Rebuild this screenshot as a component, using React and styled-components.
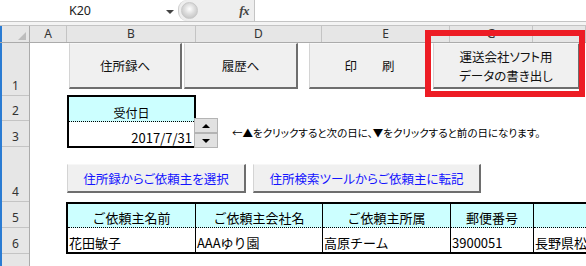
import React from 'react';
import styled, { createGlobalStyle } from 'styled-components';

const GlobalStyle = createGlobalStyle`
  html, body {
    margin: 0;
    padding: 0;
    background: #fff;
    overflow: hidden;
  }
  body {
    font-family: "Noto Sans CJK JP", "Noto Sans", sans-serif;
  }
`;

const JP = `"Noto Sans CJK JP", "Noto Sans", sans-serif`;

const Frame = styled.div`
  position: relative;
  width: 586px;
  height: 266px;
  overflow: hidden;
  background: #fff;
`;

/* ---------- formula bar ---------- */
const FormulaBar = styled.div`
  display: flex;
  height: 21px;
  border-bottom: 1px solid #c4c4c4;
`;

const NameBox = styled.div`
  display: flex;
  align-items: center;
  width: 178px;
  font-family: "Noto Sans", sans-serif;
  font-size: 12.5px;
  color: #222;
`;

const NameText = styled.div`
  width: 160px;
  text-align: center;
`;

const Caret = styled.div`
  width: 0;
  height: 0;
  margin-left: 6px;
  margin-top: 2px;
  border-left: 4px solid transparent;
  border-right: 4px solid transparent;
  border-top: 4px solid #444;
`;

const FxArea = styled.div`
  display: flex;
  align-items: center;
  justify-content: space-between;
  width: 77px;
  padding: 0 5px 0 2px;
  box-sizing: border-box;
  background: #eeeeee;
  border-left: 1px solid #cfcfcf;
  border-right: 1px solid #c4c4c4;
  border-radius: 9px 0 0 9px;
`;

const Grip = styled.div`
  width: 15px;
  height: 15px;
  border-radius: 50%;
  background: radial-gradient(circle at 50% 40%, #ffffff 0%, #dcdcdc 45%, #b8b8b8 100%);
  border: 1px solid #c8c8c8;
`;

const Fx = styled.span`
  font-family: "Liberation Serif", serif;
  font-style: italic;
  font-weight: bold;
  font-size: 13px;
  color: #444;
  letter-spacing: -0.5px;
`;

const FormulaInput = styled.div`
  flex: 1;
  background: #fff;
`;

const Strip = styled.div`
  height: 3px;
  background: #f4f4f4;
  border-bottom: 1px solid #c4c4c4;
`;

/* ---------- column headers ---------- */
const ColHeaders = styled.div`
  display: grid;
  grid-template-columns: 30px 37px 129px 126px 128px 83px 1fr;
  height: 16px;
  background: #e6e6e6;
  border-bottom: 1px solid #ababab;
`;

const ColHead = styled.div`
  position: relative;
  display: flex;
  align-items: center;
  justify-content: center;
  border-right: 1px solid #c4c4c4;
  font-family: "Noto Sans", sans-serif;
  font-size: 12px;
  color: #333;
  line-height: 1;
  &:first-child {
    border-left: 2px solid #2b7cd3;
    border-right: 1px solid #ababab;
  }
`;

const Corner = styled.div`
  position: absolute;
  right: 3px;
  bottom: 2px;
  width: 0;
  height: 0;
  border-left: 8px solid transparent;
  border-bottom: 8px solid #bdbdbd;
`;

/* ---------- body ---------- */
const Body = styled.div`
  display: flex;
`;

const RowHeaders = styled.div`
  display: flex;
  flex-direction: column;
  width: 27px;
  height: 230px;
  background: #e6e6e6;
  border-left: 2px solid #2b7cd3;
  border-right: 1px solid #ababab;
`;

const RowNum = styled.div`
  display: flex;
  align-items: flex-end;
  justify-content: center;
  height: ${p => p.h}px;
  box-sizing: border-box;
  padding-bottom: 2px;
  border-bottom: 1px solid #c4c4c4;
  font-family: "Noto Sans", sans-serif;
  font-size: 12px;
  line-height: 14px;
  color: #333;
  flex-shrink: 0;
`;

const Sheet = styled.div`
  flex: 1;
  display: flex;
  flex-direction: column;
`;

const ButtonRow = styled.div`
  display: flex;
  align-items: flex-start;
  height: ${p => p.h}px;
  padding-top: ${p => p.top || 0}px;
  box-sizing: border-box;
`;

const SheetButton = styled.div`
  display: flex;
  flex-direction: column;
  align-items: center;
  justify-content: center;
  width: ${p => p.w}px;
  height: ${p => p.h}px;
  margin-left: ${p => p.ml}px;
  box-sizing: border-box;
  background: #f0f0f0;
  border-top: 1px solid #f7f7f7;
  border-left: 1px solid #d4d4d4;
  border-right: 2px solid #6e6e6e;
  border-bottom: 2px solid #6e6e6e;
  font-family: ${JP};
  font-size: 12.5px;
  line-height: 19px;
  font-feature-settings: "palt";
  color: ${p => (p.blue ? '#1414ff' : '#111')};
  white-space: pre;
  flex-shrink: 0;
`;

const DateRow = styled.div`
  display: flex;
  align-items: flex-start;
  height: 53px;
`;

const DateBox = styled.div`
  display: flex;
  flex-direction: column;
  width: 129px;
  height: 53px;
  margin-left: 37px;
  box-sizing: border-box;
  border: 2px solid #000;
`;

const DateLabel = styled.div`
  display: flex;
  align-items: flex-end;
  justify-content: center;
  height: 25px;
  box-sizing: border-box;
  background: #ccffff;
  border-bottom: 1px dotted #000;
  font-family: ${JP};
  font-size: 12px;
  line-height: 16px;
`;

const DateValue = styled.div`
  display: flex;
  align-items: flex-end;
  justify-content: flex-end;
  flex: 1;
  padding-right: 2px;
  font-family: ${JP};
  font-size: 13px;
  line-height: 16px;
`;

const Spinner = styled.div`
  display: flex;
  flex-direction: column;
  width: 24px;
  margin-top: 23px;
  margin-left: -2px;
  position: relative;
  z-index: 1;
`;

const SpinBtn = styled.div`
  display: flex;
  align-items: center;
  justify-content: center;
  height: 15px;
  box-sizing: border-box;
  background: #e1e1e1;
  border: 1px solid #b4b4b4;
  &::after {
    content: "";
    width: 0;
    height: 0;
    border-left: 4px solid transparent;
    border-right: 4px solid transparent;
    ${p => (p.up ? 'border-bottom: 4px solid #000;' : 'border-top: 4px solid #000;')}
  }
`;

const Note = styled.div`
  margin-left: 14px;
  margin-top: 31px;
  font-family: ${JP};
  font-size: 10.5px;
  font-feature-settings: "palt";
  line-height: 14px;
  white-space: nowrap;
  color: #000;
`;

/* ---------- table ---------- */
const Table = styled.div`
  display: grid;
  grid-template-columns: 128px 127px 128px 83px 1fr;
  grid-template-rows: 24px 24px;
  margin-left: 36px;
  border-top: 2px solid #000;
  border-bottom: 2px solid #000;
  border-left: 2px solid #000;
`;

const Cell = styled.div`
  display: flex;
  align-items: flex-end;
  justify-content: ${p => (p.head ? 'center' : 'flex-start')};
  padding: 0 1px 0 1px;
  background: ${p => (p.head ? '#ccffff' : '#fff')};
  border-right: ${p => (p.last ? 'none' : '1px solid #000')};
  border-bottom: ${p => (p.head ? '1px dotted #000' : 'none')};
  font-family: ${JP};
  font-size: 13px;
  line-height: 18px;
  white-space: nowrap;
  overflow: hidden;
`;

const Highlight = styled.div`
  position: absolute;
  left: 425px;
  top: 30px;
  width: 160px;
  height: 67px;
  box-sizing: border-box;
  border: 6px solid #ed1c24;
  pointer-events: none;
`;

const rows = [
  { n: '1', h: 53 },
  { n: '2', h: 25 },
  { n: '3', h: 26 },
  { n: '4', h: 55 },
  { n: '5', h: 26 },
  { n: '6', h: 26 },
  { n: '', h: 20 },
];

const tableHead = ['ご依頼主名前', 'ご依頼主会社名', 'ご依頼主所属', '郵便番号', ''];
const tableData = ['花田敏子', 'AAAゆり園', '高原チーム', '3900051', '長野県松本市'];

export default function App() {
  return (
    <>
      <GlobalStyle />
      <Frame>
        <FormulaBar>
          <NameBox>
            <NameText>K20</NameText>
            <Caret />
          </NameBox>
          <FxArea>
            <Grip />
            <Fx>fx</Fx>
          </FxArea>
          <FormulaInput />
        </FormulaBar>
        <Strip />
        <ColHeaders>
          <ColHead><Corner /></ColHead>
          <ColHead>A</ColHead>
          <ColHead>B</ColHead>
          <ColHead>D</ColHead>
          <ColHead>E</ColHead>
          <ColHead>G</ColHead>
          <ColHead />
        </ColHeaders>
        <Body>
          <RowHeaders>
            {rows.map((r, i) => (
              <RowNum key={i} h={r.h}>{r.n}</RowNum>
            ))}
          </RowHeaders>
          <Sheet>
            <ButtonRow h={52}>
              <SheetButton ml={39} w={113} h={46}>住所録へ</SheetButton>
              <SheetButton ml={2} w={114} h={46}>履歴へ</SheetButton>
              <SheetButton ml={11} w={122} h={46}>{'印　　刷'}</SheetButton>
              <SheetButton ml={2} w={147} h={46}>
                <span>運送会社ソフト用</span>
                <span>データの書き出し</span>
              </SheetButton>
            </ButtonRow>
            <DateRow>
              <DateBox>
                <DateLabel>受付日</DateLabel>
                <DateValue>2017/7/31</DateValue>
              </DateBox>
              <Spinner>
                <SpinBtn up />
                <SpinBtn />
              </Spinner>
              <Note>←▲をクリックすると次の日に、▼をクリックすると前の日になります。</Note>
            </DateRow>
            <ButtonRow h={54} top={16}>
              <SheetButton ml={37} w={179} h={29} blue>住所録からご依頼主を選択</SheetButton>
              <SheetButton ml={7} w={228} h={29} blue>住所検索ツールからご依頼主に転記</SheetButton>
            </ButtonRow>
            <Table>
              {tableHead.map((t, i) => (
                <Cell key={'h' + i} head last={i === 4}>{t}</Cell>
              ))}
              {tableData.map((t, i) => (
                <Cell key={'d' + i} last={i === 4}>{t}</Cell>
              ))}
            </Table>
          </Sheet>
        </Body>
        <Highlight />
      </Frame>
    </>
  );
}
